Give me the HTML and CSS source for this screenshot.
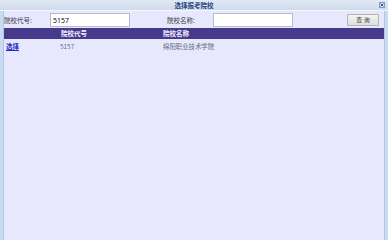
FILE: index.html
```html
<!DOCTYPE html>
<html lang="zh">
<head>
<meta charset="utf-8">
<title>选择报考院校</title>
<link rel="stylesheet" href="styles.css">
</head>
<body>
<div class="window">
  <div class="titlebar">
    <span class="title">选择报考院校</span>
    <span class="close">
      <svg width="6" height="6" viewBox="0 0 6 6"><rect x="0.5" y="0.5" width="5" height="5" fill="#dbe6f6" stroke="#7f9cc8" stroke-width="1"/><path d="M1.6 1.6L4.4 4.4M4.4 1.6L1.6 4.4" stroke="#2c4f9a" stroke-width="1"/></svg>
    </span>
  </div>
  <div class="content">
    <div class="search">
      <span class="label l1">院校代号:</span>
      <input class="field" type="text" value="5157">
      <span class="label l2">院校名称:</span>
      <input class="field" type="text" value="">
      <button class="btn">查 询</button>
    </div>
    <div class="grid head">
      <span></span>
      <span>院校代号</span>
      <span>院校名称</span>
    </div>
    <div class="grid row">
      <a class="pick" href="#">选择</a>
      <span>5157</span>
      <span>绵阳职业技术学院</span>
    </div>
  </div>
</div>
</body>
</html>
```
FILE: styles.css
```css
html, body {
  margin: 0;
  padding: 0;
}
body {
  width: 388px;
  height: 240px;
  overflow: hidden;
  background: #c9dbf0;
  font-family: "Noto Sans CJK SC", "Noto Sans", sans-serif;
}
.window {
  height: 240px;
  display: flex;
  flex-direction: column;
}
.titlebar {
  height: 10px;
  flex: none;
  background: linear-gradient(#e2e9f4, #cfdbec);
  border-bottom: 1px solid #f4f6fc;
  display: flex;
  align-items: center;
  justify-content: center;
  position: relative;
}
.title {
  font-size: 6.5px;
  font-weight: bold;
  color: #2a4680;
  line-height: 10px;
}
.close {
  position: absolute;
  right: 3px;
  top: 2px;
  width: 6px;
  height: 6px;
  display: flex;
}
.content {
  flex: 1;
  margin: 0 3px;
  background: #e7e8fe;
  border-left: 1px solid #b0c6e4;
  border-right: 1px solid #b0c6e4;
  padding: 2px 0 0 0;
}
.search {
  display: flex;
  align-items: center;
  height: 14px;
}
.label {
  font-size: 6.5px;
  color: #3c3c48;
  width: 46px;
  line-height: 14px;
}
.l2 {
  margin-left: 37px;
}
.field {
  box-sizing: border-box;
  width: 80px;
  height: 14px;
  margin: 0;
  padding: 0 2px;
  border: 1px solid #b6bccf;
  background: #fff;
  font-family: "Noto Sans", sans-serif;
  font-size: 7px;
  color: #111;
  outline: none;
}
.btn {
  box-sizing: border-box;
  margin: 0 0 0 54px;
  width: 32px;
  height: 12px;
  padding: 0;
  border: 1px solid #b4b4b4;
  border-radius: 1px;
  background: linear-gradient(#f4f4f4, #dedede);
  font-family: "Noto Sans CJK SC", sans-serif;
  font-size: 6px;
  color: #444;
  line-height: 10px;
}
.grid {
  display: grid;
  grid-template-columns: 56px 103px 1fr;
}
.head {
  margin-top: 1px;
  height: 11px;
  background: #473a8b;
  color: #f2f0ff;
  font-size: 6.5px;
  font-weight: bold;
  line-height: 11px;
}
.head span:nth-child(2) {
  padding-left: 1px;
}
.row {
  height: 13px;
  font-size: 6.4px;
  color: #666a80;
  line-height: 13px;
  margin-top: 1px;
}
.pick {
  color: #1f2fc4;
  font-weight: bold;
  font-size: 6.5px;
  text-decoration: underline;
  padding-left: 2px;
}
```
